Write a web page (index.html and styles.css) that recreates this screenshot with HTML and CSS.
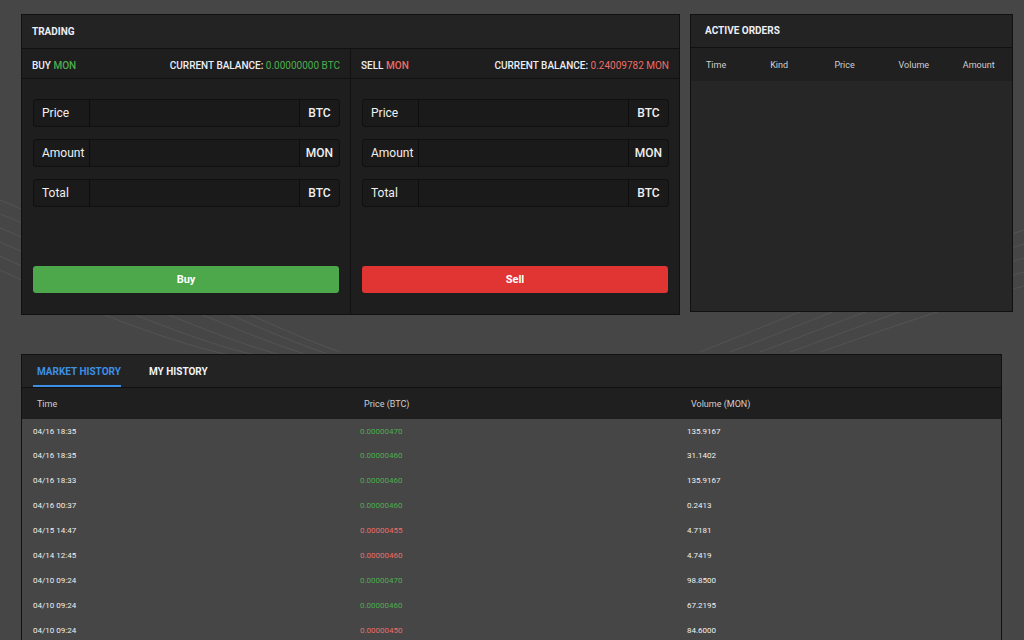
FILE: index.html
```html
<!DOCTYPE html>
<html>
<head>
<meta charset="utf-8">
<link rel="stylesheet" href="styles.css">
</head>
<body>
<div class="page">
  <div class="top">
    <section class="panel trading">
      <div class="panel-head">TRADING</div>
      <div class="trade-cols">
        <div class="trade-col">
          <div class="sub-head">
            <span>BUY <span class="green">MON</span></span>
            <span>CURRENT BALANCE: <span class="green thin">0.00000000 BTC</span></span>
          </div>
          <div class="form">
            <div class="field"><span class="lbl">Price</span><span class="inp"></span><span class="suf">BTC</span></div>
            <div class="field"><span class="lbl">Amount</span><span class="inp"></span><span class="suf">MON</span></div>
            <div class="field"><span class="lbl">Total</span><span class="inp"></span><span class="suf">BTC</span></div>
            <button class="btn buy">Buy</button>
          </div>
        </div>
        <div class="trade-col right">
          <div class="sub-head">
            <span>SELL <span class="red">MON</span></span>
            <span>CURRENT BALANCE: <span class="red thin">0.24009782 MON</span></span>
          </div>
          <div class="form">
            <div class="field"><span class="lbl">Price</span><span class="inp"></span><span class="suf">BTC</span></div>
            <div class="field"><span class="lbl">Amount</span><span class="inp"></span><span class="suf">MON</span></div>
            <div class="field"><span class="lbl">Total</span><span class="inp"></span><span class="suf">BTC</span></div>
            <button class="btn sell">Sell</button>
          </div>
        </div>
      </div>
    </section>
    <section class="panel orders">
      <div class="panel-head orders-head">ACTIVE ORDERS</div>
      <div class="orders-cols">
        <span>Time</span><span>Kind</span><span>Price</span><span>Volume</span><span>Amount</span>
      </div>
      <div class="orders-body"></div>
    </section>
  </div>
  <section class="panel history">
    <div class="tabs">
      <span class="tab active">MARKET HISTORY</span>
      <span class="tab">MY HISTORY</span>
    </div>
    <div class="hist-head">
      <span>Time</span><span>Price (BTC)</span><span>Volume (MON)</span>
    </div>
    <div class="hist-row"><span>04/16 18:35</span><span class="green">0.00000470</span><span>135.9167</span></div>
    <div class="hist-row"><span>04/16 18:35</span><span class="green">0.00000460</span><span>31.1402</span></div>
    <div class="hist-row"><span>04/16 18:33</span><span class="green">0.00000460</span><span>135.9167</span></div>
    <div class="hist-row"><span>04/16 00:37</span><span class="green">0.00000460</span><span>0.2413</span></div>
    <div class="hist-row"><span>04/15 14:47</span><span class="red">0.00000455</span><span>4.7181</span></div>
    <div class="hist-row"><span>04/14 12:45</span><span class="red">0.00000460</span><span>4.7419</span></div>
    <div class="hist-row"><span>04/10 09:24</span><span class="green">0.00000470</span><span>98.8500</span></div>
    <div class="hist-row"><span>04/10 09:24</span><span class="green">0.00000460</span><span>67.2195</span></div>
    <div class="hist-row"><span>04/10 09:24</span><span class="red">0.00000450</span><span>84.6000</span></div>
  </section>
</div>
</body>
</html>
```

FILE: styles.css
```css
* { box-sizing: border-box; }
html, body { margin: 0; padding: 0; }
body {
  width: 1024px;
  height: 640px;
  overflow: hidden;
  font-family: Roboto, "Liberation Sans", Arial, sans-serif;
  color: #e8e8e8;
  background-color: #464646;
  background-image: url("data:image/svg+xml;utf8,<svg xmlns='http://www.w3.org/2000/svg' width='1024' height='640'><g fill='none' stroke='%23595959' stroke-width='1' opacity='0.7'><path d='M0 200 C120 250 250 320 340 352'/><path d='M0 214 C120 262 250 328 325 353'/><path d='M0 228 C110 274 240 334 305 354'/><path d='M0 242 C100 286 220 340 285 356'/><path d='M0 256 C90 298 200 344 260 356'/><path d='M0 270 C80 308 180 346 235 356'/><path d='M1024 230 C900 270 780 320 700 352'/><path d='M1024 244 C900 282 790 330 730 352'/><path d='M1024 258 C910 292 810 334 760 352'/><path d='M1024 272 C920 302 830 338 790 352'/><path d='M1024 286 C930 312 850 342 820 352'/></g></svg>");
  background-repeat: no-repeat;
}
.page { padding: 14px 0 0 21px; }
.top { display: flex; align-items: flex-start; gap: 10px; }
.panel { border: 1px solid #111; }
.green { color: #4cae4f; }
.red { color: #ec6d68; }
.thin { font-weight: 400; }

.panel-head {
  height: 34px;
  display: flex;
  align-items: center;
  padding-left: 10px;
  font-size: 10px;
  font-weight: 700;
  color: #eceef5;
  background: #232323;
  border-bottom: 1px solid #111;
}

.trading { width: 659px; height: 301px; background: #1e1e1e; display: flex; flex-direction: column; }
.trade-cols { display: flex; flex: 1; }
.trade-col { flex: 1; }
.trade-col.right { border-left: 1px solid #111; }
.sub-head {
  height: 30px;
  display: flex;
  align-items: center;
  justify-content: space-between;
  padding: 3px 10px 0 10px;
  font-size: 10px;
  font-weight: 500;
  color: #eceef5;
  border-bottom: 1px solid #111;
}
.form { padding: 20px 10px 0 11px; display: flex; flex-direction: column; gap: 12px; }
.field {
  height: 28px;
  display: flex;
  background: #1a1a1b;
  border: 1px solid #101010;
  border-radius: 3px;
  font-size: 12px;
  color: #f0f0f0;
}
.lbl { width: 56px; padding-left: 8px; display: flex; align-items: center; border-right: 1px solid #0e0e0e; }
.inp { flex: 1; }
.suf { width: 40px; display: flex; align-items: center; justify-content: center; border-left: 1px solid #0e0e0e; font-weight: 500; }
.btn {
  margin-top: 47px;
  height: 27px;
  border: none;
  border-radius: 3px;
  color: #fff;
  font-family: Roboto, "Liberation Sans", Arial, sans-serif;
  font-size: 11px;
  font-weight: 700;
}
.btn.buy { background: #4ca84a; width: 306px; }
.btn.sell { background: #e03532; width: 306px; }

.orders { width: 323px; height: 298px; background: #262626; display: flex; flex-direction: column; }
.orders-head { height: 33px; padding-left: 14px; padding-bottom: 1px; }
.orders-cols {
  height: 33px;
  display: grid;
  grid-template-columns: repeat(5, 1fr);
  align-items: center;
  background: #202020;
  font-size: 9px;
  color: #cfcfcf;
}
.orders-cols span { padding-left: 15px; }
.orders-body { flex: 1; }

.history { width: 981px; margin-top: 39px; height: 300px; background: #464646; }
.tabs {
  height: 33px;
  display: flex;
  align-items: stretch;
  padding-left: 11px;
  gap: 28px;
  background: #232323;
  border-bottom: 1px solid #111;
}
.tab {
  display: flex;
  align-items: center;
  padding: 2px 0 0 0;
  font-size: 10px;
  font-weight: 700;
  color: #f3f3f7;
  border-bottom: 2px solid transparent;
}
.tab.active { color: #3d8fe6; border-bottom-color: #3d8fe6; padding-left: 4px; }
.hist-head {
  height: 31px;
  display: grid;
  grid-template-columns: 327px 327px 1fr;
  align-items: center;
  background: #1f1f1f;
  font-size: 9px;
  color: #cfcfcf;
}
.hist-head span { padding-left: 15px; }
.hist-row {
  height: 25px;
  display: grid;
  grid-template-columns: 327px 327px 1fr;
  align-items: center;
  font-size: 8px;
  color: #f0f0f0;
}
.hist-head + .hist-row { height: 24px; }
.hist-row span { padding-left: 11px; }
```
